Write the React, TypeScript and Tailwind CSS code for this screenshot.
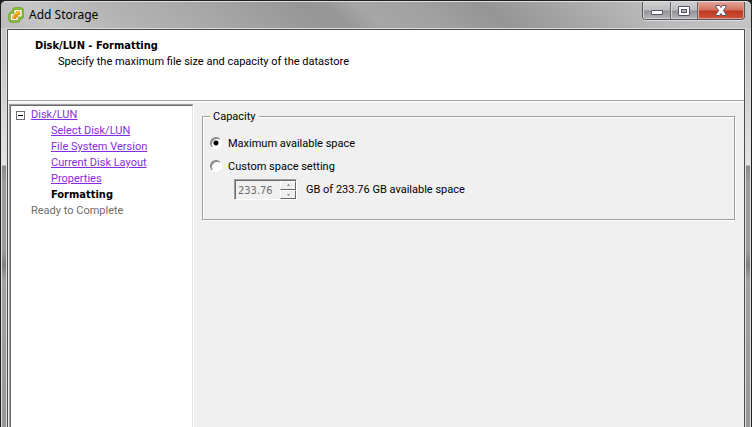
import { useState } from "react";

const steps = ["Select Disk/LUN", "File System Version", "Current Disk Layout", "Properties"];

function AppIcon() {
  return (
    <svg width="16" height="16" viewBox="0 0 16 16" aria-hidden="true">
      <path
        d="M7.500 1.500h5A2.500 2.500 0 0 1 15 4v4.500a2.500 2.500 0 0 1-2.500 2.500H11.500v1a2.500 2.500 0 0 1-2.500 2.500H4A2.500 2.500 0 0 1 1.500 12V8A2.500 2.500 0 0 1 4 5.500h1V4A2.500 2.500 0 0 1 7.500 1.500z"
        fill="#f0eedc"
        stroke="#6a9c2c"
        strokeWidth="2.400"
      />
      <path
        d="M7.500 1.500h5A2.500 2.500 0 0 1 15 4v4.500a2.500 2.500 0 0 1-2.500 2.500H11.500v1a2.500 2.500 0 0 1-2.500 2.500H4A2.500 2.500 0 0 1 1.500 12V8A2.500 2.500 0 0 1 4 5.500h1V4A2.500 2.500 0 0 1 7.500 1.500z"
        fill="none"
        stroke="#84bd38"
        strokeWidth="1.400"
      />
      <path d="M8 4h4v4h-2v2H8.500v2H4.500V8.500H6.500V6.500H8z" fill="#e3900f" />
      <path d="M8 4h4v1.500L8 8zM4.500 8.500h2V10l-2 1z" fill="#f5b53a" />
    </svg>
  );
}

function TitleBar() {
  return (
    <header className="flex h-[26px] items-start pl-[6px] pr-[5px]">
      <div className="flex h-[26px] flex-1 items-center gap-[5px]">
        <AppIcon />
        <h1 className="font-['Noto_Sans',sans-serif] text-[12px] leading-4 text-black">Add Storage</h1>
      </div>
      <div className="flex h-[18px] overflow-hidden rounded-b-[4px] border border-t-0 border-[#55555c] shadow-[0_1px_0_#dcdcdc]">
        <button
          type="button"
          aria-label="Minimize"
          className="flex w-[28px] items-center justify-center border-r border-[#66666c] bg-[linear-gradient(#d0d0d2_0,#bcbcc0_48%,#929298_52%,#b6b6ba_100%)] shadow-[inset_1px_-1px_0_#d4d4d6]"
        >
          <svg width="12" height="12" viewBox="0 0 12 12" aria-hidden="true">
            <rect x="0.500" y="5.500" width="11" height="4" rx="0.500" fill="#fff" stroke="#54546a" />
          </svg>
        </button>
        <button
          type="button"
          aria-label="Maximize"
          className="flex w-[27px] items-center justify-center border-r border-[#66666c] bg-[linear-gradient(#d0d0d2_0,#bcbcc0_48%,#929298_52%,#b6b6ba_100%)] shadow-[inset_1px_-1px_0_#d4d4d6]"
        >
          <svg width="12" height="10" viewBox="0 0 12 10" aria-hidden="true">
            <rect x="0.500" y="0.500" width="11" height="9" rx="0.500" fill="#fff" stroke="#54546a" />
            <rect x="3.500" y="3.500" width="5" height="3" fill="#b4b4b8" stroke="#54546a" />
          </svg>
        </button>
        <button
          type="button"
          aria-label="Close"
          className="flex w-[46px] items-center justify-center bg-[linear-gradient(#e2a497_0,#d2705c_48%,#bd3820_52%,#d0543a_100%)] shadow-[inset_0_0_0_1px_#e0a094]"
        >
          <svg width="12" height="11" viewBox="0 0 12 11" aria-hidden="true">
            <path
              d="M1 .5h3.500L6 2.500 7.500.5H11v1.500L8.300 5.500 11 9v1.500H7.500L6 8.500 4.500 10.500H1V9l2.700-3.500L1 2z"
              fill="#fff"
              stroke="#54546a"
            />
          </svg>
        </button>
      </div>
    </header>
  );
}

function StepTree() {
  return (
    <nav
      aria-label="Wizard steps"
      className="ml-px mt-px w-[184px] shrink-0 border-l border-t border-[#a0a0a0] bg-white"
    >
      <div className="h-full border-l border-t border-r border-l-[#696969] border-r-[#e3e3e3] border-t-[#696969] pl-[5px] pt-px">
        <div className="flex h-4 items-center gap-[6px]">
          <button
            type="button"
            aria-label="Collapse Disk/LUN"
            className="flex size-[9px] items-center justify-center border border-[#707070] bg-white"
          >
            <span className="h-px w-[5px] bg-black" />
          </button>
          <a href="#disk" className="text-[#8a2be2] underline">
            Disk/LUN
          </a>
        </div>
        <ul className="pl-[35px]">
          {steps.map((s) => (
            <li key={s} className="h-4">
              <a href="#step" className="text-[#8a2be2] underline">
                {s}
              </a>
            </li>
          ))}
          <li className="h-4 font-['DejaVu_Sans_Condensed','DejaVu_Sans',sans-serif] font-bold text-black" aria-current="step">
            Formatting
          </li>
        </ul>
        <p className="pl-[15px] text-[#6d6d6d]">Ready to Complete</p>
      </div>
    </nav>
  );
}

const radioClass =
  "size-3 shrink-0 appearance-none rounded-full border border-b-white border-l-[#808080] border-r-white border-t-[#808080] bg-white shadow-[inset_1px_1px_0_#8a8a8a] checked:bg-[radial-gradient(circle,#000_0,#000_2px,transparent_3px)]";

function CapacityBox() {
  const [mode, setMode] = useState("max");
  const custom = mode === "custom";
  return (
    <fieldset className="h-[112px] border border-[#a0a0a0] px-[7px] shadow-[1px_1px_0_#fff,inset_1px_1px_0_#fff]">
      <legend className="bg-[#f0f0f0] px-[3px] pt-[2px] leading-[14px]">Capacity</legend>
      <div className="mt-[7px] flex h-[23px] items-center gap-[6px]">
        <input id="max" type="radio" name="space" className={radioClass} checked={!custom} onChange={() => setMode("max")} />
        <label htmlFor="max" className="pt-[2px]">Maximum available space</label>
      </div>
      <div className="flex h-[23px] items-center gap-[6px]">
        <input id="custom" type="radio" name="space" className={radioClass} checked={custom} onChange={() => setMode("custom")} />
        <label htmlFor="custom" className="pt-[2px]">Custom space setting</label>
      </div>
      <div className="mt-[2px] flex items-center gap-[9px] pl-[24px]">
        <div className="flex h-[21px] w-[63px] border border-b-white border-l-[#a0a0a0] border-r-white border-t-[#a0a0a0] bg-[#f0f0f0] shadow-[inset_1px_1px_0_#696969]">
          <input
            id="size"
            type="text"
            disabled={!custom}
            defaultValue="233.76"
            className="min-w-0 flex-1 pl-[3px] pt-[2px] font-['DejaVu_Sans_Condensed','DejaVu_Sans',sans-serif] text-[#6d6d6d]"
          />
          <div className="flex w-4 flex-col pt-px">
            <button
              type="button"
              aria-label="Increase"
              disabled={!custom}
              className="flex flex-1 items-center justify-center border border-b-[#696969] border-l-white border-r-[#696969] border-t-white"
            >
              <svg width="5" height="3" viewBox="0 0 5 3" aria-hidden="true">
                <path d="M2 0h1v1h1v1H1V1h1z" fill="#a0a0a0" />
              </svg>
            </button>
            <button
              type="button"
              aria-label="Decrease"
              disabled={!custom}
              className="flex flex-1 items-center justify-center border border-b-[#696969] border-l-white border-r-[#696969] border-t-white"
            >
              <svg width="5" height="3" viewBox="0 0 5 3" aria-hidden="true">
                <path d="M1 1h3v1H3v1H2V2H1z" fill="#a0a0a0" />
              </svg>
            </button>
          </div>
        </div>
        <label htmlFor="size">GB of 233.76 GB available space</label>
      </div>
    </fieldset>
  );
}

export default function App() {
  return (
    <div className="bg-[#231f20]">
      <div className="flex h-screen flex-col overflow-hidden rounded-t-[6px] border border-b-0 border-[#231f20] bg-[linear-gradient(#c4c4c4_0,#c8c8c8_60px,#e4e4e4_164px,#8c8c8c_165px,#9c9c9c_180px,#9c9c9c_250px,#808080_264px,#a2a2a2_280px,#989898_100%)] font-['Roboto',sans-serif] text-[11px] leading-4 text-black">
        <div className="flex min-h-0 flex-1 flex-col rounded-t-[5px] border border-b-0 border-[#dedede]">
          <div className="-mx-px bg-[linear-gradient(40deg,#bcbcbc_0,#c6c6c6_7%,#b4b4b4_16%,#a8a8a8_28%,#969696_42%,#979797_45%,#a6a6a6_49%,#a2a2a2_56%,#959595_65%,#a8a8a8_76%,#bcbcbc_87%,#c6c6c6_100%)] px-px">
            <TitleBar />
          </div>
          <div className="mx-1 flex min-h-0 flex-1 flex-col border border-b-0 border-[#dedede]">
            <main className="flex min-h-0 flex-1 flex-col border border-b-0 border-[#4c4c4c] bg-[#f0f0f0]">
              <section className="h-[71px] border-b border-[#a0a0a0] bg-white pl-[27px] pt-[8px] shadow-[0_1px_0_#fff]">
                <h2 className="font-['DejaVu_Sans_Condensed','DejaVu_Sans',sans-serif] font-bold">Disk/LUN - Formatting</h2>
                <p className="pl-[23px]">Specify the maximum file size and capacity of the datastore</p>
              </section>
              <div className="flex min-h-0 flex-1 pt-[2px]">
                <StepTree />
                <section className="flex-1 border-l border-white pl-[8px] pr-[9px] pt-[5px]">
                  <CapacityBox />
                </section>
              </div>
            </main>
          </div>
        </div>
      </div>
    </div>
  );
}
